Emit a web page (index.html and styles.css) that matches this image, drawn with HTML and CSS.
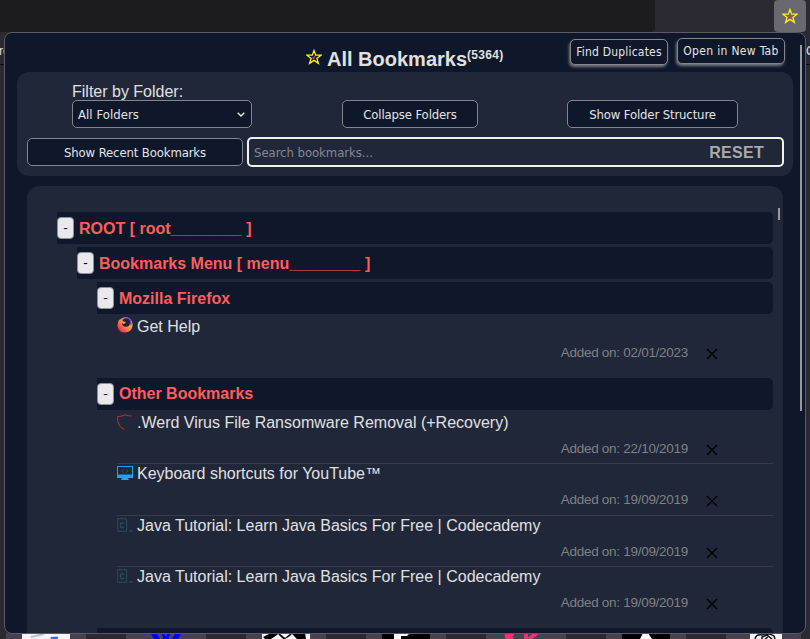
FILE: index.html
```html
<!DOCTYPE html>
<html lang="en">
<head>
<meta charset="utf-8">
<title>All Bookmarks</title>
<link rel="stylesheet" href="styles.css">
</head>
<body>
<svg class="defs" aria-hidden="true">
  <symbol id="star" viewBox="0 0 16 16"><path d="M8 1.500 9.700 6.200H15L10.900 9.400 12.400 14.400 8 11.400 3.600 14.400 5.100 9.400 1 6.200H6.300Z" fill="none" stroke="#f3f31d" stroke-width="1.300"/><path d="m6.500 8.500 1 1.200L9.300 7" fill="none" stroke="#dc3545" stroke-width="1.300"/></symbol>
  <symbol id="cross" viewBox="0 0 12 12"><path d="m1 1 10 10M11 1 1 11" fill="none" stroke="#000" stroke-width="1.400"/></symbol>
  <symbol id="code" viewBox="0 0 16 16"><rect x=".6" y="1.600" width="9" height="12.800" rx=".8" fill="none" stroke="#24485a" stroke-width="1.200"/><path d="M7.200 6H4.200Q3.500 6 3.500 7v2.500q0 1 .7 1h3" fill="none" stroke="#24485a" stroke-width="1.400"/><path d="M12 14h4" stroke="#24485a" stroke-width="1.400"/></symbol>
</svg>
<div class="browser">
  <div class="toolbar">
    <div class="address"></div>
    <div class="extension"><svg class="star-icon"><use href="#star"/></svg></div>
  </div>
  <div class="bookmarks-bar"><span class="left">re</span><span class="right">C</span></div>
  <svg class="page-tiles" width="810" height="6" viewBox="0 0 810 6">
    <path fill="#46424f" d="M6 0h795v6H6z"/>
    <path fill="#2b2a33" d="M86 0h40v6H86zM206 0h40v6h-40zM326 0h40v6h-40zM446 0h40v6h-40zM566 0h40v6h-40zM686 0h40v6h-40z"/>
    <path fill="#f4f5f8" d="M22 0h48v6H22zM262 0h48v6h-48zM750 0h32v6h-32z"/>
    <path d="m31 4 13-3M50 5l8-1" stroke="#b9bfcd" stroke-width="2"/><path d="M51 5h7" stroke="#376ee8" stroke-width="2"/>
    <path fill="#00f" d="M151 1h6l3 5h-6zM162 1h3v2h-3zM167 1h3v2h-3zM163 3h6v3h-6zM175 1h6l-3 5h-6z"/>
    <path fill="#000" d="M271 0h8l6 5 6-5h14l1 6h-10l-4-4-7 4h-2l-6-4-6 4h-6l-2-2z"/><path fill="#fff" d="m273 6 5-5 5 5zM287 6l5-5 5 5z"/>
    <path fill="#000" d="M382 0h48v6h-48zM622 0h48v6h-48z"/>
    <path fill="#fff" d="M394 1h15l-2 2h-6v3h-7zM640 6l3-6h5l4 6z"/>
    <path fill="none" stroke="#f52f75" stroke-width="4" d="M514 1q-9 0-7 3l6 2M526 0v6m11-6-8 6"/>
    <path fill="none" stroke="#111" stroke-width="1.500" d="M755 6q1-5 7-4 6-3 12 1l1 3M762 6V4l5-2 5 4M765 6l3-2"/>
  </svg>
</div>

<main class="popup">
  <header class="title-bar">
    <h1><svg class="star-icon"><use href="#star"/></svg><span>All Bookmarks</span><sup>(5364)</sup></h1>
    <div class="actions">
      <button class="btn raised">Find Duplicates</button>
      <button class="btn raised tab">Open in New Tab</button>
    </div>
  </header>

  <section class="filters">
    <div class="filter-row">
      <div class="folder-filter">
        <span class="label">Filter by Folder:</span>
        <div class="btn select">All Folders<svg width="8" height="5" viewBox="0 0 8 5"><path d="m.7.7 3.300 3.300L7.300.7" fill="none" stroke="#e4e4e4" stroke-width="1.400"/></svg></div>
      </div>
      <button class="btn collapse">Collapse Folders</button>
      <button class="btn structure">Show Folder Structure</button>
    </div>
    <div class="search-row">
      <button class="btn recent">Show Recent Bookmarks</button>
      <div class="search"><span class="placeholder">Search bookmarks...</span><span class="reset">RESET</span></div>
    </div>
  </section>

  <section class="tree">
    <div class="folder"><span class="toggle">-</span><span class="name">ROOT [ root________ ]</span></div>
    <div class="folder l1"><span class="toggle">-</span><span class="name">Bookmarks Menu [ menu________ ]</span></div>
    <div class="folder l2"><span class="toggle">-</span><span class="name">Mozilla Firefox</span></div>
    <ul class="short">
      <li><a><svg class="favicon" viewBox="0 0 16 16"><defs><linearGradient id="fire" x1="1" y1="0" x2="0" y2="1"><stop offset="0" stop-color="#ffe44f"/><stop offset=".45" stop-color="#ff9838"/><stop offset=".8" stop-color="#f73c55"/><stop offset="1" stop-color="#e82083"/></linearGradient></defs><path d="M2 3 4 2q3-3 8-1 4 3 3.500 8-1 6-7.500 6.500-6 0-7.300-5.500Q0 6 2 3Z" fill="url(#fire)"/><path d="M5 3Q8-1 12 1q4 3 2 8Q12 1 5 3Z" fill="#7438cf"/><circle cx="9" cy="5.700" r="4" fill="#25203d"/><path d="M4 4q4 0 5 2L6 7Z" fill="#ffa43b"/></svg>Get Help</a><p><span>Added on: 02/01/2023</span><svg class="remove"><use href="#cross"/></svg></p></li>
    </ul>
    <div class="folder l2"><span class="toggle">-</span><span class="name other">Other Bookmarks</span></div>
    <ul>
      <li><a><svg class="favicon" viewBox="0 0 16 16"><path d="M15 2Q11 2 8 .7 4 2.700.7 2.500V7q.8 5.500 6.500 8.500" fill="none" stroke="#a52d36" stroke-width="1.100"/></svg>.Werd Virus File Ransomware Removal (+Recovery)</a><p><span>Added on: 22/10/2019</span><svg class="remove"><use href="#cross"/></svg></p></li>
      <li><a><svg class="favicon" viewBox="0 0 16 16"><rect x=".5" y="1.500" width="15" height="9" fill="#202739" stroke="#279ee6"/><path d="M0 9.500h16V13h-5l1 2H4l1-2H0Z" fill="#279ee6"/><path d="m7 4-2 2 2 2m2-4 2 2-2 2" fill="none" stroke="#3c424e"/></svg>Keyboard shortcuts for YouTube™</a><p><span>Added on: 19/09/2019</span><svg class="remove"><use href="#cross"/></svg></p></li>
      <li><a><svg class="favicon"><use href="#code"/></svg>Java Tutorial: Learn Java Basics For Free | Codecademy</a><p><span>Added on: 19/09/2019</span><svg class="remove"><use href="#cross"/></svg></p></li>
      <li><a><svg class="favicon"><use href="#code"/></svg>Java Tutorial: Learn Java Basics For Free | Codecademy</a><p><span>Added on: 19/09/2019</span><svg class="remove"><use href="#cross"/></svg></p></li>
    </ul>
    <div class="folder l2"></div>
    <i class="tree-scroll"></i>
  </section>
  <i class="popup-scroll"></i>
</main>
</body>
</html>
```

FILE: styles.css
```css
* { box-sizing: border-box; }
body {
  margin: 0;
  width: 810px;
  height: 639px;
  overflow: hidden;
  background: #2b2a30;
  color: #e0e0e0;
  font: 16px/18px "Liberation Sans", Arial, sans-serif;
}
.defs { position: absolute; width: 0; height: 0; }
.browser { display: flex; flex-direction: column; height: 639px; }
.toolbar { display: flex; height: 32px; background: #2b2a33; }
.address { width: 655px; background: #1c1b20; border-radius: 0 0 4px 0; }
.extension {
  display: flex;
  align-items: center;
  justify-content: center;
  width: 32px;
  margin-left: auto;
  margin-right: 4px;
  background: #69676f;
  border-radius: 4px;
}
.star-icon { width: 16px; height: 16px; }
.bookmarks-bar {
  display: flex;
  justify-content: space-between;
  height: 33px;
  padding-top: 10px;
  border-bottom: 1px solid #0c0c0e;
  background: #2b2a33;
  font-size: 12px;
}
.bookmarks-bar .left { margin-left: -1px; }
.bookmarks-bar .right { width: 4px; }
.page-tiles { display: block; margin-top: auto; }
.popup {
  position: absolute;
  left: 4px;
  top: 32px;
  width: 802px;
  height: 602px;
  overflow: hidden;
  border: 1px solid #5b5962;
  border-radius: 8px;
  background: #0f172a;
}
.title-bar { position: relative; height: 39px; }
h1 {
  display: flex;
  align-items: flex-start;
  margin: 0;
  padding: 14px 0 0 301px;
  font-size: 20px;
  line-height: 25px;
}
h1 .star-icon { margin: 2px 5px 0 0; }
sup { font-size: 12px; line-height: 16px; letter-spacing: .3px; }
.actions { position: absolute; top: 5px; right: 20px; display: flex; gap: 9px; }
.btn {
  display: block;
  height: 28px;
  padding: 0;
  border: 1px solid #858585;
  border-radius: 5px;
  background: #0f172a;
  color: #e4e4e4;
  font: 13px/27px "DejaVu Sans Condensed", "DejaVu Sans", sans-serif;
  font-stretch: condensed;
  letter-spacing: -.13px;
  text-align: center;
  white-space: nowrap;
}
.raised {
  width: 98px;
  height: 26px;
  margin-top: 1px;
  font-size: 12px;
  line-height: 22px;
  letter-spacing: .2px;
  box-shadow: -1px 2px 3px #777a85;
}
.raised.tab { width: 108px; margin-top: 0; letter-spacing: .32px; line-height: 25px; }
.filters { width: 776px; height: 104px; margin-left: 12px; padding: 10px; border-radius: 12px; background: #202739; }
.filter-row { display: flex; align-items: flex-end; height: 46px; padding-left: 45px; }
.folder-filter { width: 180px; }
.label { display: block; height: 18px; line-height: 20px; }
.select { display: flex; align-items: center; justify-content: space-between; padding: 1px 6px 0 5px; letter-spacing: .05px; }
.collapse { width: 136px; margin-left: 90px; }
.structure { width: 171px; margin-left: 89px; }
.search-row { display: flex; gap: 4px; margin-top: 9px; }
.recent { flex: none; width: 216px; margin-top: 1px; }
.search {
  display: flex;
  flex: none;
  align-items: center;
  justify-content: space-between;
  width: 537px;
  height: 30px;
  padding: 1px 18px 0 5px;
  border: 2px solid #f1f1ee;
  border-radius: 5px;
}
.placeholder { color: #858890; font: 13px "DejaVu Sans Condensed", "DejaVu Sans", sans-serif; font-stretch: condensed; letter-spacing: -.05px; }
.reset { color: #aaa; font-weight: bold; letter-spacing: .3px; }
.tree {
  position: relative;
  width: 756px;
  height: 470px;
  margin: 10px 0 0 22px;
  padding: 26px 10px 0 30px;
  border-radius: 12px 12px 0 0;
  background: #202739;
}
.folder {
  display: flex;
  align-items: center;
  height: 32px;
  margin-bottom: 3px;
  border-radius: 0 5px 5px 0;
  background: #0f172a;
  color: #ff5c5c;
  font-weight: bold;
}
.name { padding-top: 2px; }
.name.other { padding-top: 0; }
.l1 { margin-left: 20px; }
.l2 { margin-left: 40px; margin-bottom: 0; }
.toggle {
  display: block;
  width: 17px;
  height: 22px;
  margin-right: 5px;
  border: 1px solid #8f8f9d;
  border-radius: 4px;
  background: #e9e9ed;
  color: #000;
  font: 13.333px/19px "Liberation Sans", Arial, sans-serif;
  text-align: center;
}
ul { list-style: none; margin: 0 0 0 60px; padding: 1.900px 0 10.100px; }
.short { height: 64px; padding-top: 1px; }
li { height: 51.500px; }
li + li { border-top: 1px solid #373b45; }
a { display: flex; padding-top: 1px; }
li:first-child a { padding-top: 2px; }
.favicon { width: 16px; height: 16px; margin-right: 4px; }
.short li:first-child a { padding-top: 3px; }
.short .favicon { margin-top: -1px; }
p {
  display: flex;
  justify-content: flex-end;
  margin: 9px 55px 0 0;
  color: #7f8183;
  line-height: 16px;
}
p span { font-size: 13.500px; letter-spacing: -.28px; }
.remove { width: 12px; height: 12px; margin: 3px 0 0 18px; }
.tree-scroll { position: absolute; top: 22px; right: 3px; width: 2px; height: 12px; background: #999; }
.popup-scroll { position: absolute; top: 12px; right: 3px; width: 2px; height: 366px; background: #999; }
```
